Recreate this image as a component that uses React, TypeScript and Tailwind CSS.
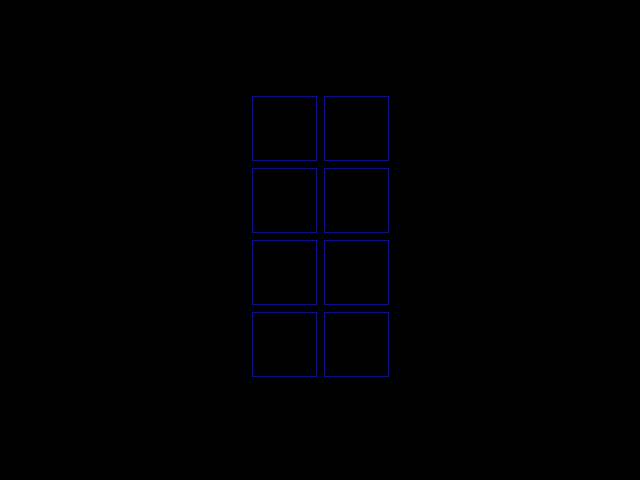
import React from 'react';

const App: React.FC = () => {
    const cells = Array.from({ length: 8 });
    return (
        <div className="w-[640px] h-[480px] bg-black pt-[96px] pl-[252px]">
            <div className="grid grid-cols-[65px_65px] gap-[7px]">
                {cells.map((_, i) => (
                    <div key={i} className="w-[65px] h-[65px] border border-[#0000ff]"></div>
                ))}
            </div>
        </div>
    );
};

export default App;
